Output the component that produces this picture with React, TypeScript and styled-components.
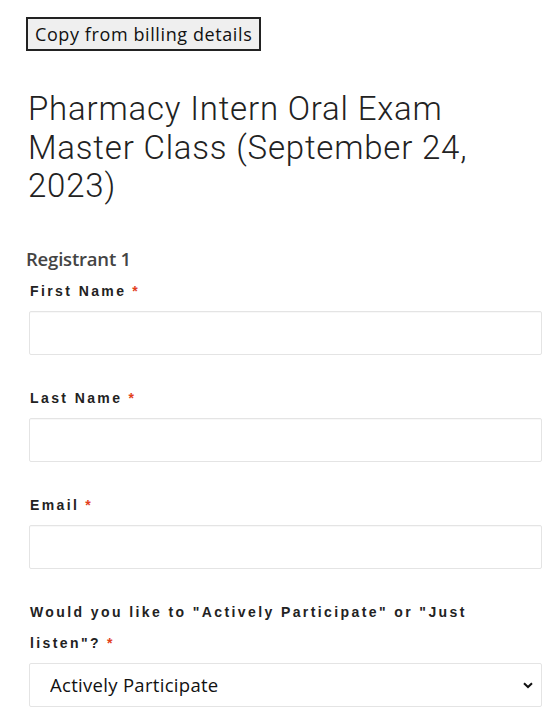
import React from "react";
import styled, { createGlobalStyle } from "styled-components";

const Global = createGlobalStyle`
  html, body { margin: 0; padding: 0; background: #fff; }
  body { font-family: "Open Sans", sans-serif; }
`;

const Page = styled.div`
  padding: 17px 15px 20px 26px;
  display: flex;
  flex-direction: column;
  align-items: flex-start;
`;

const CopyButton = styled.button`
  font-family: "Open Sans", sans-serif;
  font-size: 18px;
  letter-spacing: 0.6px;
  color: #111;
  background: #efefef;
  border: 2px solid #222;
  padding: 0 7px 1px;
  height: 34px;
  cursor: pointer;
`;

const Title = styled.h2`
  font-family: "Roboto", sans-serif;
  font-weight: 300;
  font-size: 33px;
  line-height: 38.5px;
  color: #222;
  margin: 39px 0 0 2px;
  width: 512px;
  letter-spacing: 0.8px;
`;

const Registrant = styled.h3`
  font-family: "Open Sans", sans-serif;
  font-weight: 600;
  font-size: 18.5px;
  letter-spacing: -0.2px;
  color: #444;
  margin: 41px 0 0 0;
  line-height: 24px;
`;

const Fields = styled.div`
  display: flex;
  flex-direction: column;
  gap: 28px;
  width: 513px;
  margin: 5px 0 0 3px;
`;

const Field = styled.div`
  display: flex;
  flex-direction: column;
`;

const Label = styled.label`
  font-family: "Liberation Sans", Arial, sans-serif;
  font-weight: 700;
  font-size: 14px;
  letter-spacing: 2.4px;
  line-height: 31px;
  color: #222;
  padding-left: 1px;
  margin-bottom: 4px;
`;

const Req = styled.span`
  color: #e2401c;
  margin-left: 6px;
`;

const TextInput = styled.input`
  box-sizing: border-box;
  height: 44px;
  width: 100%;
  border: 1px solid #e4e4e4;
  border-radius: 2px;
  background: #fff;
  box-shadow: inset 0 1px 1px rgba(0,0,0,0.03);
  outline: none;
`;

const SelectWrap = styled.div`
  position: relative;
  width: 100%;
`;

const Select = styled.select`
  box-sizing: border-box;
  appearance: none;
  height: 44px;
  width: 100%;
  border: 1px solid #e4e4e4;
  border-radius: 2px;
  background: #fff;
  font-family: "Open Sans", sans-serif;
  font-size: 18.5px;
  letter-spacing: 0.3px;
  color: #111;
  padding: 0 0 0 20px;
  outline: none;
`;

const Chevron = styled.svg`
  position: absolute;
  right: 9px;
  top: 19px;
  pointer-events: none;
`;

export default function App() {
  return (
    <>
      <Global />
      <Page>
        <CopyButton>Copy from billing details</CopyButton>
        <Title>Pharmacy Intern Oral Exam Master Class (September 24, 2023)</Title>
        <Registrant>Registrant 1</Registrant>
        <Fields>
          <Field>
            <Label>First Name<Req>*</Req></Label>
            <TextInput type="text" />
          </Field>
          <Field>
            <Label>Last Name<Req>*</Req></Label>
            <TextInput type="text" />
          </Field>
          <Field>
            <Label>Email<Req>*</Req></Label>
            <TextInput type="email" />
          </Field>
          <Field>
            <Label>Would you like to "Actively Participate" or "Just listen"?<Req>*</Req></Label>
            <SelectWrap>
              <Select defaultValue="a">
                <option value="a">Actively Participate</option>
                <option value="b">Just listen</option>
              </Select>
              <Chevron width="10" height="7" viewBox="0 0 10 7">
                <path d="M1 1.2 L5 5 L9 1.2" fill="none" stroke="#111" strokeWidth="2" />
              </Chevron>
            </SelectWrap>
          </Field>
        </Fields>
      </Page>
    </>
  );
}
